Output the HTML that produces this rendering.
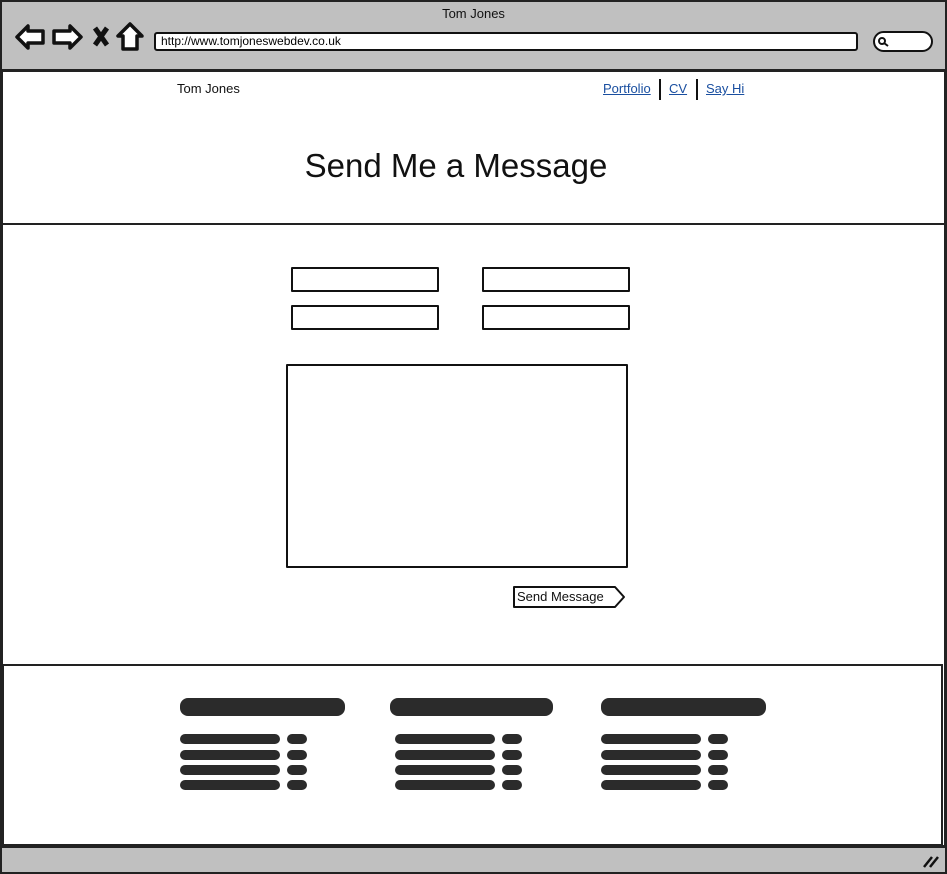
<!DOCTYPE html>
<html><head><style>
body{margin:0;width:947px;height:874px;position:relative;background:#fff;font-family:"Liberation Sans",sans-serif;overflow:hidden}
.a{position:absolute;box-sizing:border-box}
.box{border:2px solid #111;background:#fff;border-radius:1px}
.sq{background:#2b2b2b;border-radius:8px}
a{color:#1a4fa0;text-decoration:underline}
</style></head><body>
<div class="a" style="left:0;top:0;width:947px;height:874px;border:3px solid #222"></div>
<div class="a" style="left:2px;top:2px;width:943px;height:70px;background:#c0c0c0;border-bottom:3px solid #222"></div>
<div class="a" style="left:0;top:6px;width:947px;text-align:center;font-size:13px;color:#111">Tom Jones</div>
<svg class="a" style="left:14px;top:21px" width="132" height="32" viewBox="0 0 132 32">
<g fill="#fff" stroke="#111" stroke-width="3.5" stroke-linejoin="round">
<path d="M3 16 L14 5 L14 10 L29 10 L29 22 L14 22 L14 27 Z"/>
<path d="M67 16 L56 5 L56 10 L40 10 L40 22 L56 22 L56 27 Z"/>
<path d="M116 3 L104 15 L109 15 L109 28 L123 28 L123 15 L128 15 Z"/>
</g>
<path d="M81 7 L93 24 M93 7 L81 24" stroke="#111" stroke-width="5"/>
</svg>
<div class="a" style="left:154px;top:32px;width:704px;height:19px;background:#fff;border:2px solid #111;border-radius:3px;font-size:12px;padding:0 0 0 5px;line-height:15px">http://www.tomjoneswebdev.co.uk</div>
<div class="a" style="left:873px;top:31px;width:60px;height:21px;background:#fff;border:2px solid #111;border-radius:11px"></div>
<svg class="a" style="left:877px;top:36px" width="14" height="12"><circle cx="5" cy="5" r="3" fill="none" stroke="#111" stroke-width="2"/><path d="M7 7 L11 10" stroke="#111" stroke-width="2"/></svg>
<div class="a" style="left:177px;top:81px;font-size:13px;color:#111">Tom Jones</div>
<div class="a" style="left:603px;top:81px;font-size:13px"><a>Portfolio</a></div>
<div class="a" style="left:659px;top:79px;width:2px;height:21px;background:#111"></div>
<div class="a" style="left:669px;top:81px;font-size:13px"><a>CV</a></div>
<div class="a" style="left:696px;top:79px;width:2px;height:21px;background:#111"></div>
<div class="a" style="left:706px;top:81px;font-size:13px"><a>Say Hi</a></div>
<div class="a" style="left:0;top:147px;width:912px;text-align:center;font-size:33px;color:#111">Send Me a Message</div>
<div class="a" style="left:2px;top:223px;width:943px;height:2px;background:#222"></div>
<div class="a box" style="left:291px;top:267px;width:148px;height:25px"></div>
<div class="a box" style="left:482px;top:267px;width:148px;height:25px"></div>
<div class="a box" style="left:291px;top:305px;width:148px;height:25px"></div>
<div class="a box" style="left:482px;top:305px;width:148px;height:25px"></div>
<div class="a box" style="left:286px;top:364px;width:342px;height:204px"></div>
<svg class="a" style="left:511px;top:584px" width="116" height="26"><path d="M3 3 L104 3 L113 13 L104 23 L3 23 Z" fill="#fff" stroke="#111" stroke-width="2" stroke-linejoin="round"/><text x="6" y="17" font-family="Liberation Sans" font-size="13" fill="#111">Send Message</text></svg>
<div class="a" style="left:2px;top:664px;width:941px;height:182px;border:2px solid #222"></div>
<div class="a" style="left:2px;top:845px;width:943px;height:27px;background:#c0c0c0;border-top:3px solid #222"></div>
<svg class="a" style="left:922px;top:853px" width="20" height="16"><path d="M2 14 L10 4 M8 14 L16 4" stroke="#111" stroke-width="2.5"/></svg>
<div class="a sq" style="left:180px;top:698px;width:165px;height:18px"></div>
<div class="a sq" style="left:390px;top:698px;width:163px;height:18px"></div>
<div class="a sq" style="left:601px;top:698px;width:165px;height:18px"></div>
<div class="a sq" style="left:180px;top:734px;width:100px;height:10px"></div><div class="a sq" style="left:287px;top:734px;width:20px;height:10px"></div>
<div class="a sq" style="left:180px;top:750px;width:100px;height:10px"></div><div class="a sq" style="left:287px;top:750px;width:20px;height:10px"></div>
<div class="a sq" style="left:180px;top:765px;width:100px;height:10px"></div><div class="a sq" style="left:287px;top:765px;width:20px;height:10px"></div>
<div class="a sq" style="left:180px;top:780px;width:100px;height:10px"></div><div class="a sq" style="left:287px;top:780px;width:20px;height:10px"></div>
<div class="a sq" style="left:395px;top:734px;width:100px;height:10px"></div><div class="a sq" style="left:502px;top:734px;width:20px;height:10px"></div>
<div class="a sq" style="left:395px;top:750px;width:100px;height:10px"></div><div class="a sq" style="left:502px;top:750px;width:20px;height:10px"></div>
<div class="a sq" style="left:395px;top:765px;width:100px;height:10px"></div><div class="a sq" style="left:502px;top:765px;width:20px;height:10px"></div>
<div class="a sq" style="left:395px;top:780px;width:100px;height:10px"></div><div class="a sq" style="left:502px;top:780px;width:20px;height:10px"></div>
<div class="a sq" style="left:601px;top:734px;width:100px;height:10px"></div><div class="a sq" style="left:708px;top:734px;width:20px;height:10px"></div>
<div class="a sq" style="left:601px;top:750px;width:100px;height:10px"></div><div class="a sq" style="left:708px;top:750px;width:20px;height:10px"></div>
<div class="a sq" style="left:601px;top:765px;width:100px;height:10px"></div><div class="a sq" style="left:708px;top:765px;width:20px;height:10px"></div>
<div class="a sq" style="left:601px;top:780px;width:100px;height:10px"></div><div class="a sq" style="left:708px;top:780px;width:20px;height:10px"></div>
</body></html>
